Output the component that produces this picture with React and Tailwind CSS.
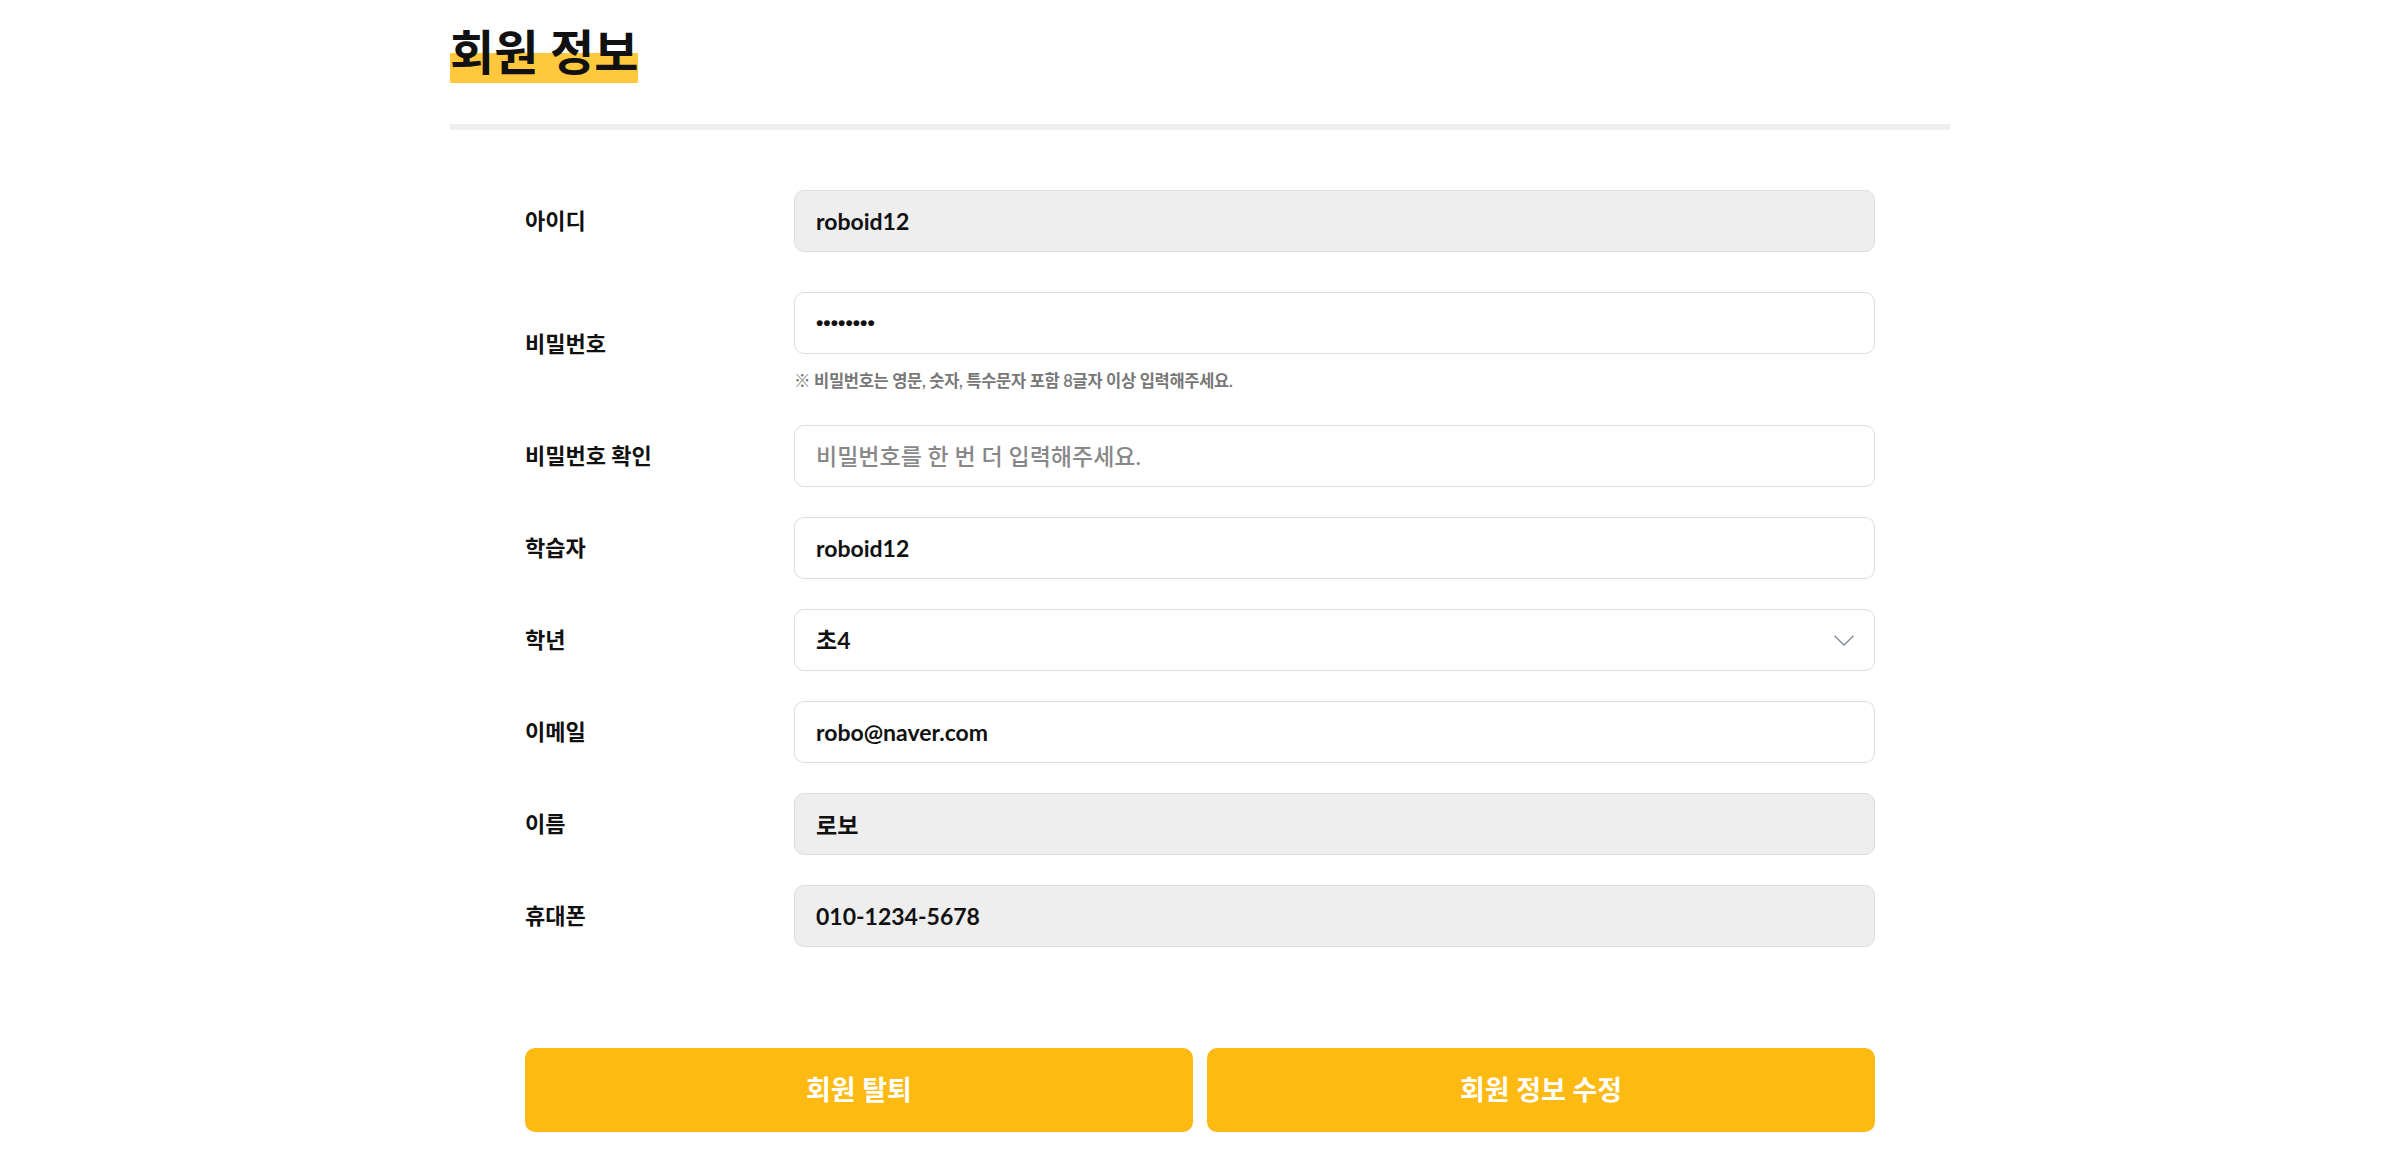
const Label = ({ children }) => (
  <div className="w-[269px] shrink-0 text-[22px] font-bold leading-none text-[#111]">{children}</div>
);

const TextField = ({ value, placeholder, disabled = false, className = '' }) => (
  <input
    type="text"
    readOnly
    value={value}
    placeholder={placeholder}
    className={`h-[62px] w-full rounded-[10px] border border-[#dddddd] px-[21px] text-[23px] font-bold text-[#111] outline-none placeholder:font-medium placeholder:text-[#888888] ${
      disabled ? 'bg-[#eeeeee]' : 'bg-white'
    } ${className}`}
  />
);

const Row = ({ label, children }) => (
  <div className="flex items-center">
    <Label>{label}</Label>
    <div className="flex-1">{children}</div>
  </div>
);

export default function App() {
  return (
    <div className="min-h-screen bg-white font-['Lato','Noto_Sans_CJK_KR',sans-serif] text-[#111]">
      <div className="mx-auto w-[1500px] pt-[21px]">
        <h1 className="text-[48px] font-bold leading-[62px]">
          <span className="inline-block bg-[linear-gradient(transparent_51%,#ffc83d_51%)]">회원 정보</span>
        </h1>
        <div className="mt-[41px] h-[6px] bg-[#eeeeee]" />

        <div className="px-[75px] pt-[60px]">
          <div className="flex flex-col gap-[30px]">
            <Row label="아이디">
              <TextField value="roboid12" disabled />
            </Row>

            <div className="mt-[10px] flex items-center">
              <Label>비밀번호</Label>
              <div className="flex-1">
                <TextField value="••••••••" className="font-['Liberation_Sans',sans-serif] !text-[21px]" />
                <p className="h-[41px] pt-[18px] text-[16.5px] font-semibold leading-[18px] tracking-[-0.3px] text-[#777777]">
                  ※ 비밀번호는 영문, 숫자, 특수문자 포함 8글자 이상 입력해주세요.
                </p>
              </div>
            </div>

            <Row label="비밀번호 확인">
              <TextField value="" placeholder="비밀번호를 한 번 더 입력해주세요." />
            </Row>

            <Row label="학습자">
              <TextField value="roboid12" />
            </Row>

            <Row label="학년">
              <div className="flex h-[62px] w-full items-center justify-between rounded-[10px] border border-[#dddddd] bg-white pl-[21px] pr-[20px] text-[23px] font-bold">
                <span>초4</span>
                <svg width="20" height="11" viewBox="0 0 20 11" fill="none" className="text-[#7d8796]">
                  <path d="M0.5 0.8 L10 10 L19.5 0.8" stroke="currentColor" strokeWidth="1.3" />
                </svg>
              </div>
            </Row>

            <Row label="이메일">
              <TextField value="robo@naver.com" />
            </Row>

            <Row label="이름">
              <TextField value="로보" disabled />
            </Row>

            <Row label="휴대폰">
              <TextField value="010-1234-5678" disabled />
            </Row>
          </div>

          <div className="mt-[101px] grid grid-cols-2 gap-[14px]">
            <button className="h-[84px] rounded-[10px] bg-[#fdba12] text-[27px] font-bold text-white">회원 탈퇴</button>
            <button className="h-[84px] rounded-[10px] bg-[#fdba12] text-[27px] font-bold text-white">
              회원 정보 수정
            </button>
          </div>
        </div>
      </div>
    </div>
  );
}
